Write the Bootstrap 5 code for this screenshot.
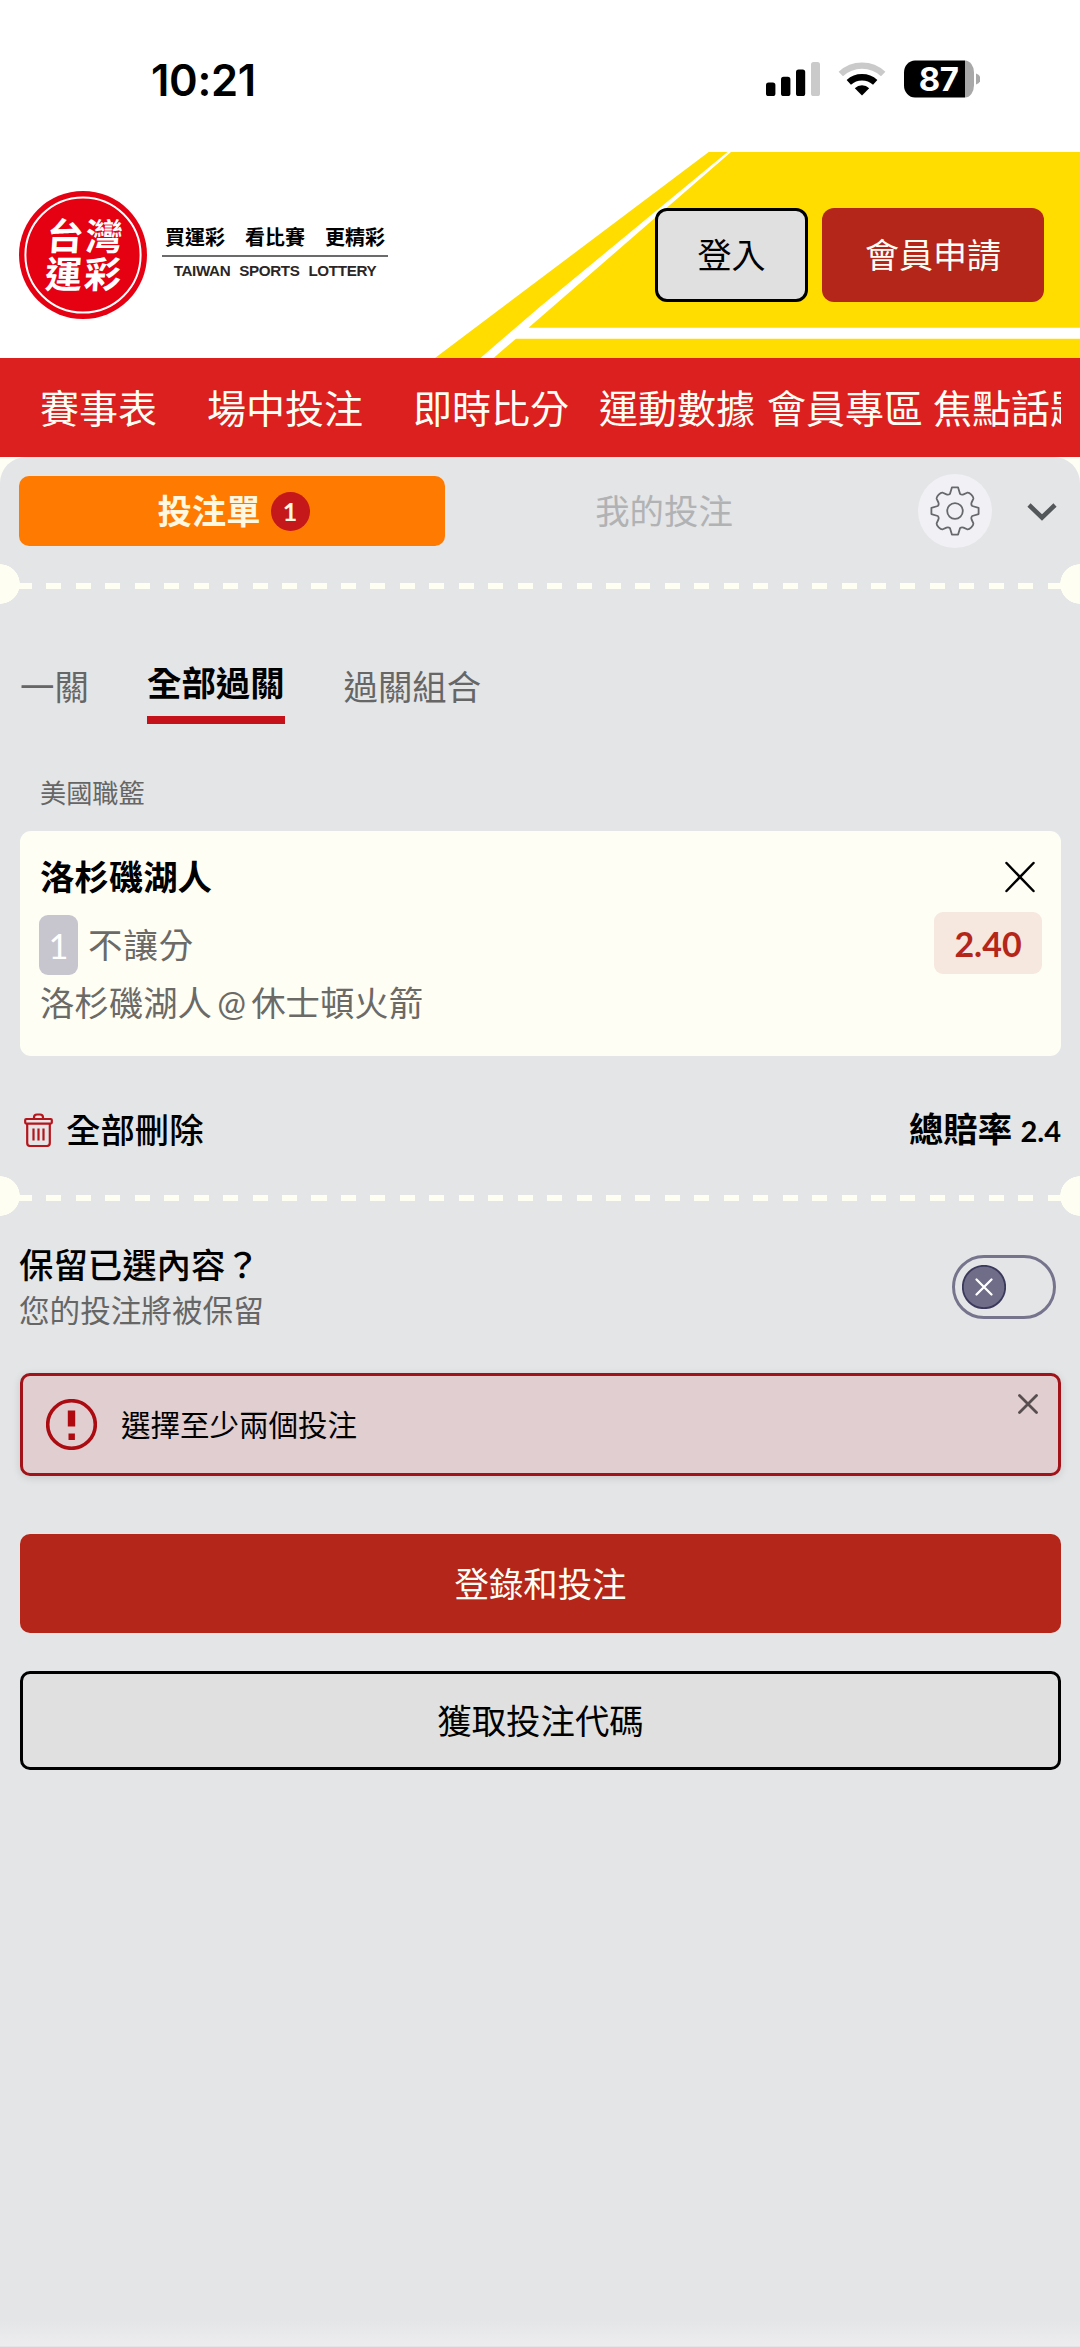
<!DOCTYPE html>
<html lang="zh-Hant">
<head>
<meta charset="utf-8">
<meta name="viewport" content="width=device-width, initial-scale=1">
<title>台灣運彩 投注單</title>
<link href="https://cdn.jsdelivr.net/npm/bootstrap@5.3.0/dist/css/bootstrap.min.css" rel="stylesheet">
<style>
  body { font-family: Lato, "Noto Sans CJK TC", sans-serif; background: #fff; color: #000; font-size: 34.4px; line-height: 40px; }
  svg { display: block; flex: none; }
  button { font-family: inherit; }
  .app-screen { width: 1080px; height: 2347px; overflow: hidden; }
  .status-bar { height: 152px; padding: 60px 100px 0 151px; }
  .status-time { font: 600 43.5px/40px Inter, sans-serif; letter-spacing: -.3px; }
  .site-header { height: 206px; padding: 0 36px 0 19px; }
  .header-art { position: absolute; inset: 0; z-index: 0; }
  .site-header > .d-flex { z-index: 1; }
  .logo-seal { width: 128px; height: 128px; }
  .slogan { width: 226px; margin-left: 15px; margin-top: -6px; }
  .slogan-zh { font: 700 20px/26px "Noto Sans CJK TC", sans-serif; border-bottom: 2px solid #6b6b6b; padding: 0 0 5px 3px; white-space: pre; }
  .slogan-en { font: 700 15.2px/20px "Liberation Sans", Arial, sans-serif; color: #2b2625; letter-spacing: -.35px; word-spacing: 5px; padding-top: 4px; }
  .btn-flat { font-size: 34px; line-height: 40px; border-radius: 12px; padding: 0; display: flex; align-items: center; justify-content: center; }
  .btn-outline { background: #e0e0e0; border: 3px solid #000; color: #000; }
  .btn-solid { background: #b5261a; border: 0; color: #fffef5; }
  .head-btn { height: 94px; }
  .main-nav { height: 99px; background: #dc1f1f; padding: 0 19px 0 40px; }
  .main-nav .nav { overflow: hidden; white-space: nowrap; }
  .main-nav .nav-link { color: #fffef5; font-size: 39px; line-height: 60px; padding: 0; flex: none; }
  .sheet-back { background: #fffef5; }
  .bet-sheet { height: 1890px; background: #e4e5e7; border-radius: 26px 26px 0 0; overflow: hidden; }
  .slip-tabs { height: 107px; padding: 17px 23px 0 19px; }
  .slip-tab { height: 70px; margin-top: 2px; padding-left: 3px; border-radius: 10px; background: #ff7a00; color: #fff8e0; width: 427px; font-weight: 700; }
  .slip-count { width: 39px; height: 39px; background: #c4181a; font-size: 25px; line-height: 39px; margin-left: 10px; }
  .tab-side { height: 74px; }
  .mybets { width: 438px; color: #b1b2b4; }
  .gear-disc { width: 74px; height: 74px; background: #f1f1f5; margin-left: 35px; }
  .ticket-cut { height: 40px; background:
      radial-gradient(circle at 0 50%, #fffef3 19.5px, transparent 20px),
      radial-gradient(circle at 100% 50%, #fffef3 19.5px, transparent 20px),
      repeating-linear-gradient(90deg, #fffef3 0 15px, transparent 15px 29.45px) 17px 19px / 1046px 6px no-repeat; }
  .combo-tabs { margin-top: 51px; height: 75px; padding-left: 20px; color: #666; }
  .combo-on { color: #000; font-weight: 700; border-bottom: 8px solid #c4111a; height: 69px; padding-top: 8px; }
  .league { font-size: 26.2px; line-height: 34px; color: #666; margin: 46px 0 0 40px; }
  .pick { height: 225px; margin: 21px 19px 0 20px; border-radius: 11px; background: #fffef5; padding: 26px 20px 0; color: #6b6a67; }
  .pick-team { color: #000; font-weight: 700; }
  .pick-match { margin-top: 8px; word-spacing: -3.6px; }
  .pick-tag { width: 39px; height: 60px; border-radius: 9px; background: #c7c5ce; color: #fff; line-height: 62px; margin-right: 10px; }
  .odds { width: 108px; height: 62px; border-radius: 9px; background: #f6e7df; color: #b5261a; font-weight: 700; font-size: 34px; line-height: 64px; }
  .sum-row { height: 40px; margin: 54px 19px 0 24px; font-weight: 700; }
  .keep-row { margin: 29px 24px 0 19px; }
  .keep-sub { font-size: 30.6px; color: #666; line-height: 36px; margin-top: 8px; }
  .toggle-pill { width: 104px; height: 64px; border: 3px solid #76748d; border-radius: 32px; padding-left: 7px; }
  .warn { height: 103px; margin: 44px 19px 0 20px; border: 3px solid #a11318; border-radius: 10px; background: #e1ced0; font-size: 29.5px; padding: 0 20px 0 23px; box-shadow: 0 2px 8px rgba(0,0,0,.12); }
  .wide-btn { height: 99px; margin: 0 19px 0 20px; font-size: 34.4px; border-radius: 10px; }
  .w-mid { font-weight: 500; }
  .home-fade { height: 27px; margin-top: 549px; background: linear-gradient(#e4e5e7, #ededef); }
</style>
<script src="https://cdn.jsdelivr.net/npm/bootstrap@5.3.0/dist/js/bootstrap.bundle.min.js"></script>
</head>
<body>
<div class="app-screen">

  <div class="status-bar d-flex justify-content-between align-items-start">
    <div class="status-time">10:21</div>
    <svg width="214" height="38" viewBox="766 60 214 38">
      <rect x="766" y="82.5" width="9.4" height="13.5" rx="2.6"/>
      <rect x="781" y="76.8" width="9.4" height="19.2" rx="2.6"/>
      <rect x="796" y="69.5" width="9.2" height="26.5" rx="2.6"/>
      <rect x="811" y="62" width="9" height="34" rx="2.6" fill="#cacaca"/>
      <g fill="none">
        <path d="M840.8 74 A31 31 0 0 1 883.2 74" stroke="#cacaca" stroke-width="6.4"/>
        <path d="M848.8 82.4 A19.5 19.5 0 0 1 875.2 82.4" stroke="#000" stroke-width="6.4"/>
      </g>
      <path d="M862 95.6 L854.8 88.2 A10.5 10.5 0 0 1 869.2 88.2 Z"/>
      <path d="M965 60.5 a9 12 0 0 1 9 12 v13 a9 12 0 0 1 -9 12z" fill="#a8a8a8"/>
      <path d="M965 60.5 V97.5 H915 a11 12 0 0 1 -11 -12 v-13 a11 12 0 0 1 11 -12z"/>
      <path d="M976 73.5 q4.5 1.5 4.5 5.5 t-4.5 5.5z" fill="#a8a8a8"/>
      <text x="938.5" y="91" text-anchor="middle" fill="#fff" font-family="Inter, sans-serif" font-weight="700" font-size="33" letter-spacing="-.5">87</text>
    </svg>
  </div>

  <header class="site-header position-relative d-flex justify-content-between align-items-center">
    <svg class="header-art" width="1080" height="206" viewBox="0 152 1080 206">
      <g fill="#ffdd00">
        <path d="M708.7 152 H727.5 L540 306.7 L480.4 358 H435z"/>
        <path d="M731 152 H1080 V327.7 H528.5z"/>
        <path d="M516 338.7 H1080 V358 H493.5z"/>
      </g>
    </svg>
    <div class="d-flex align-items-center position-relative">
      <svg class="logo-seal" viewBox="0 0 128 128">
        <circle cx="64" cy="64" r="64" fill="#e50012"/>
        <circle cx="64" cy="64" r="57.6" fill="none" stroke="#fff" stroke-width="2"/>
        <g transform="translate(70 0) skewX(-4) translate(-64 0)" fill="#fff" font-family="'Noto Sans CJK TC', sans-serif" font-weight="700" font-size="37" text-anchor="middle">
          <text x="63" y="59.5" textLength="76">台灣</text>
          <text x="64" y="97.5" textLength="76">運彩</text>
        </g>
      </svg>
      <div class="slogan">
        <div class="slogan-zh">買運彩　看比賽　更精彩</div>
        <div class="slogan-en text-center text-nowrap">TAIWAN SPORTS LOTTERY</div>
      </div>
    </div>
    <div class="d-flex position-relative">
      <button class="btn btn-flat btn-outline head-btn" style="width:153px">登入</button>
      <button class="btn btn-flat btn-solid head-btn" style="width:222px;margin-left:14px">會員申請</button>
    </div>
  </header>

  <nav class="main-nav d-flex align-items-center">
    <div class="nav flex-nowrap">
      <a class="nav-link" style="width:167px">賽事表</a>
      <a class="nav-link" style="width:206px">場中投注</a>
      <a class="nav-link" style="width:186px">即時比分</a>
      <a class="nav-link" style="width:168px">運動數據</a>
      <a class="nav-link" style="width:166px">會員專區</a>
      <a class="nav-link">焦點話題</a>
    </div>
  </nav>

  <div class="sheet-back">
  <main class="bet-sheet">
    <div class="slip-tabs d-flex align-items-start">
      <div class="slip-tab d-flex align-items-center justify-content-center">投注單<span class="slip-count rounded-circle text-center">1</span></div>
      <div class="tab-side d-flex align-items-center">
        <div class="mybets text-center">我的投注</div>
        <div class="gear-disc rounded-circle d-flex align-items-center justify-content-center">
          <svg width="50" height="50" viewBox="-25 -25 50 50" fill="none" stroke="#66686b" stroke-width="1.8" stroke-linejoin="round">
            <circle r="7.8"/>
            <path d="M-3.1 -23.6 L3.1 -23.6 L5 -17.2 Q6.5 -15.8 8.5 -16.6 L12.2 -18.3 Q13.8 -18.8 16.3 -16.3 Q18.8 -13.8 18.3 -12.2 L16.6 -8.5 Q15.8 -6.5 17.2 -5 L23.6 -3.1 L23.6 3.1 L17.2 5 Q15.8 6.5 16.6 8.5 L18.3 12.2 Q18.8 13.8 16.3 16.3 Q13.8 18.8 12.2 18.3 L8.5 16.6 Q6.5 15.8 5 17.2 L3.1 23.6 L-3.1 23.6 L-5 17.2 Q-6.5 15.8 -8.5 16.6 L-12.2 18.3 Q-13.8 18.8 -16.3 16.3 Q-18.8 13.8 -18.3 12.2 L-16.6 8.5 Q-15.8 6.5 -17.2 5 L-23.6 3.1 L-23.6 -3.1 L-17.2 -5 Q-15.8 -6.5 -16.6 -8.5 L-18.3 -12.2 Q-18.8 -13.8 -16.3 -16.3 Q-13.8 -18.8 -12.2 -18.3 L-8.5 -16.6 Q-6.5 -15.8 -5 -17.2 Z"/>
          </svg>
        </div>
        <svg style="margin-left:35px" width="30" height="20" viewBox="0 0 30 20" fill="none" stroke="#54575a" stroke-width="4.6"><path d="M2 4 L15 16.5 L28 4"/></svg>
      </div>
    </div>
    <div class="ticket-cut"></div>

    <div class="combo-tabs d-flex align-items-start">
      <div style="width:127px;padding-top:12px">一關</div>
      <div class="combo-on">全部過關</div>
      <div style="margin-left:59px;padding-top:12px">過關組合</div>
    </div>

    <div class="league">美國職籃</div>
    <section class="pick">
      <div class="d-flex justify-content-between align-items-center">
        <div class="pick-team">洛杉磯湖人</div>
        <svg width="30" height="32" viewBox="0 0 30 32" style="margin-right:6px" fill="none" stroke="#000" stroke-width="2.5" stroke-linecap="round"><path d="M1.5 2 L28.5 30 M28.5 2 L1.5 30"/></svg>
      </div>
      <div class="d-flex justify-content-between" style="margin-top:15px">
        <div class="d-flex align-items-center" style="margin:3px 0 0 -1px;height:60px">
          <span class="pick-tag text-center">1</span><span style="letter-spacing:1px">不讓分</span>
        </div>
        <div class="odds text-center" style="margin-right:-1px">2.40</div>
      </div>
      <div class="pick-match">洛杉磯湖人 @ 休士頓火箭</div>
    </section>

    <div class="sum-row d-flex justify-content-between align-items-center">
      <div class="d-flex align-items-center w-mid">
        <svg width="29" height="34" viewBox="0 0 29 34" fill="none" stroke="#b5161c" stroke-width="2.2" stroke-linejoin="round">
          <path d="M10 6 V4.5 q0-3 3-3 h3 q3 0 3 3 V6"/>
          <rect x="1.2" y="6" width="26.6" height="4.6" rx="1"/>
          <path d="M3.2 10.6 V30 q0 3 3 3 h16.6 q3 0 3-3 V10.6"/>
          <path d="M9.5 15.5 V27.5 M14.5 15.5 V27.5 M19.5 15.5 V27.5"/>
        </svg>
        <span style="margin-left:13px">全部刪除</span>
      </div>
      <div>總賠率 <span style="font-size:29px">2.4</span></div>
    </div>
    <div class="ticket-cut" style="margin-top:26px"></div>

    <div class="keep-row d-flex justify-content-between align-items-start">
      <div>
        <div class="w-mid">保留已選內容？</div>
        <div class="keep-sub">您的投注將被保留</div>
      </div>
      <div class="toggle-pill d-flex align-items-center" style="margin-top:10px">
        <svg width="44" height="44" viewBox="0 0 44 44"><circle cx="22" cy="22" r="21.2" fill="#6f6d87" stroke="#3c3a5c" stroke-width="1.8"/><path d="M14.5 14.5 L29.5 29.5 M29.5 14.5 L14.5 29.5" stroke="#fff" stroke-width="2.3" stroke-linecap="round"/></svg>
      </div>
    </div>

    <div class="warn d-flex align-items-center" role="alert">
      <svg width="51" height="51" viewBox="0 0 51 51"><circle cx="25.5" cy="25.5" r="23.8" fill="none" stroke="#aa0c12" stroke-width="3.6"/><path d="M21.8 11.5h7.4v16h-7.4z M22.5 34.5h6.4v6.6h-6.4z" fill="#b00a10"/></svg>
      <span class="flex-grow-1" style="margin-left:24px">選擇至少兩個投注</span>
      <svg width="20" height="20" viewBox="0 0 20 20" style="margin-bottom:42px" stroke="#574e50" stroke-width="2.8" stroke-linecap="round"><path d="M1.5 1.5 L18.5 18.5 M18.5 1.5 L1.5 18.5"/></svg>
    </div>

    <div class="btn-flat btn-solid wide-btn" style="margin-top:58px">登錄和投注</div>
    <div class="btn-flat btn-outline wide-btn" style="margin-top:38px">獲取投注代碼</div>
    <div class="home-fade"></div>
  </main>
  </div>
</div>
</body>
</html>
